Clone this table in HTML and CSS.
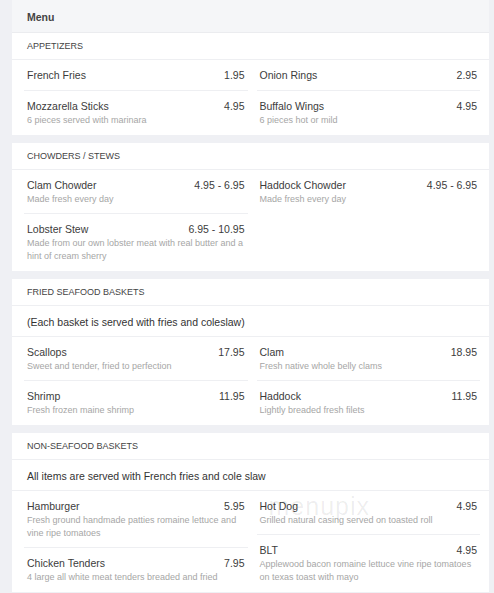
FILE: index.html
```html
<!DOCTYPE html>
<html>
<head>
<meta charset="utf-8">
<link rel="stylesheet" href="styles.css">
</head>
<body>
<div class="page">
  <div class="card">
    <div class="card-head">Menu</div>
    <div class="sec-title">APPETIZERS</div>
    <div class="items">
      <div class="col">
        <div class="item"><div class="row"><span>French Fries</span><span>1.95</span></div></div>
        <div class="item"><div class="row"><span>Mozzarella Sticks</span><span>4.95</span></div><div class="desc">6 pieces served with marinara</div></div>
      </div>
      <div class="col">
        <div class="item"><div class="row"><span>Onion Rings</span><span>2.95</span></div></div>
        <div class="item"><div class="row"><span>Buffalo Wings</span><span>4.95</span></div><div class="desc">6 pieces hot or mild</div></div>
      </div>
    </div>
  </div>

  <div class="card">
    <div class="sec-title">CHOWDERS / STEWS</div>
    <div class="items">
      <div class="col">
        <div class="item"><div class="row"><span>Clam Chowder</span><span>4.95 - 6.95</span></div><div class="desc">Made fresh every day</div></div>
        <div class="item"><div class="row"><span>Lobster Stew</span><span>6.95 - 10.95</span></div><div class="desc">Made from our own lobster meat with real butter and a hint of cream sherry</div></div>
      </div>
      <div class="col">
        <div class="item"><div class="row"><span>Haddock Chowder</span><span>4.95 - 6.95</span></div><div class="desc">Made fresh every day</div></div>
      </div>
    </div>
  </div>

  <div class="card">
    <div class="sec-title">FRIED SEAFOOD BASKETS</div>
    <div class="note">(Each basket is served with fries and coleslaw)</div>
    <div class="items">
      <div class="col">
        <div class="item"><div class="row"><span>Scallops</span><span>17.95</span></div><div class="desc">Sweet and tender, fried to perfection</div></div>
        <div class="item"><div class="row"><span>Shrimp</span><span>11.95</span></div><div class="desc">Fresh frozen maine shrimp</div></div>
      </div>
      <div class="col">
        <div class="item"><div class="row"><span>Clam</span><span>18.95</span></div><div class="desc">Fresh native whole belly clams</div></div>
        <div class="item"><div class="row"><span>Haddock</span><span>11.95</span></div><div class="desc">Lightly breaded fresh filets</div></div>
      </div>
    </div>
  </div>

  <div class="card">
    <div class="sec-title">NON-SEAFOOD BASKETS</div>
    <div class="note">All items are served with French fries and cole slaw</div>
    <div class="items">
      <div class="col">
        <div class="item"><div class="row"><span>Hamburger</span><span>5.95</span></div><div class="desc">Fresh ground handmade patties romaine lettuce and vine ripe tomatoes</div></div>
        <div class="item"><div class="row"><span>Chicken Tenders</span><span>7.95</span></div><div class="desc">4 large all white meat tenders breaded and fried</div></div>
      </div>
      <div class="col wm-host">
        <div class="item"><div class="row"><span>Hot Dog</span><span>4.95</span></div><div class="desc">Grilled natural casing served on toasted roll</div></div>
        <div class="item"><div class="row"><span>BLT</span><span>4.95</span></div><div class="desc">Applewood bacon romaine lettuce vine ripe tomatoes on texas toast with mayo</div></div>
        <div class="watermark">menupix</div>
      </div>
    </div>
  </div>
</div>
</body>
</html>
```

FILE: styles.css
```css
html, body {
  margin: 0;
  padding: 0;
  background: #eff0f4;
}
body {
  font-family: "Liberation Sans", Arial, sans-serif;
  color: #3a3a3a;
}
.page {
  padding: 0 5px 0 12px;
}
.card {
  background: #ffffff;
  margin-bottom: 8px;
}
.card-head {
  background: #f5f6f8;
  height: 33px;
  line-height: 35px;
  padding-left: 15px;
  font-size: 10.5px;
  font-weight: bold;
  color: #444;
  border-bottom: 1px solid #ebecef;
  box-sizing: border-box;
}
.sec-title {
  height: 26px;
  line-height: 26px;
  padding-left: 15px;
  font-size: 9px;
  color: #444;
  border-bottom: 1px solid #eeeff2;
}
.note {
  height: 30px;
  line-height: 32px;
  padding-left: 15px;
  font-size: 10.5px;
  color: #333;
  border-bottom: 1px solid #eeeff2;
}
.items {
  display: grid;
  grid-template-columns: 1fr 1fr;
  column-gap: 9px;
  padding: 0 9px 0 12px;
}
.col {
  display: flex;
  flex-direction: column;
  min-width: 0;
}
.wm-host {
  position: relative;
}
.item {
  padding: 8px 3px 7px;
  border-bottom: 1px solid #eeeff2;
}
.item:last-child,
.item:nth-last-child(2):has(+ .watermark) {
  border-bottom: none;
  padding-bottom: 8px;
}
.row {
  display: flex;
  justify-content: space-between;
  font-size: 10.5px;
  line-height: 15px;
  color: #3c3c3c;
}
.desc {
  font-size: 9px;
  line-height: 13px;
  color: #a6a6a6;
}
.watermark {
  position: absolute;
  left: 12px;
  top: 1px;
  font-size: 25px;
  letter-spacing: 1px;
  color: rgba(0, 0, 0, 0.07);
  font-family: "Liberation Sans", Arial, sans-serif;
  pointer-events: none;
}
```
